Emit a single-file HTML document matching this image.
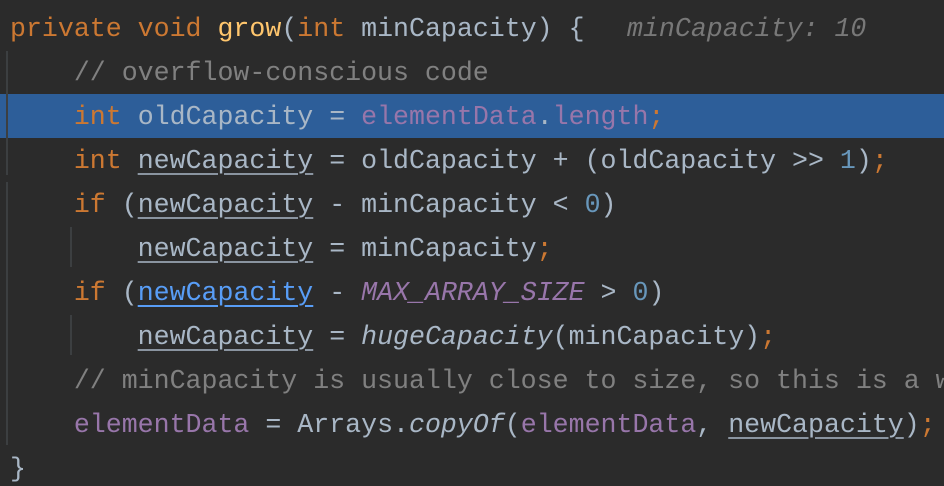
<!DOCTYPE html>
<html><head><meta charset="utf-8"><style>
html,body{margin:0;padding:0;background:#2b2b2b;width:944px;height:486px;overflow:hidden}
#w{position:relative;width:944px;height:486px;overflow:hidden}
.ln{position:absolute;left:10px;height:44px;line-height:44px;font-family:"Liberation Mono",monospace;font-size:26.6px;color:#a9b7c6;white-space:pre}
.k{color:#cc7832}.m{color:#ffc66d}.c{color:#808080}.f{color:#9876aa}.n{color:#6897bb}.i{font-style:italic}
.u{text-decoration:underline;text-decoration-color:#8a94a0;text-underline-offset:5px;text-decoration-thickness:2px}
.b{color:#589df6;text-decoration:underline;text-decoration-color:#589df6;text-underline-offset:5px;text-decoration-thickness:2px}
.hl{position:absolute;left:0;top:94px;width:944px;height:44px;background:#2d5e99}
.g{position:absolute;width:2px;background:#3c3f41}
.h{position:absolute;left:627px;top:7px;line-height:44px;font-family:"Liberation Mono",monospace;font-size:26.6px;font-style:italic;color:#787878;white-space:pre}
</style></head><body><div id="w">
<div class="hl"></div>
<div class="g" style="left:6px;top:51px;height:124px"></div>
<div class="g" style="left:6px;top:182px;height:263px"></div>
<div class="g" style="left:70px;top:227px;height:40px"></div>
<div class="g" style="left:70px;top:315px;height:40px"></div>
<div class="ln" style="top:7px"><span class="k">private void </span><span class="m">grow</span>(<span class="k">int </span>minCapacity) {</div>
<div class="h">minCapacity: 10</div>
<div class="ln c" style="top:51px">    // overflow-conscious code</div>
<div class="ln" style="top:95px">    <span class="k">int </span>oldCapacity = <span class="f">elementData</span>.<span class="f">length</span><span class="k">;</span></div>
<div class="ln" style="top:139px">    <span class="k">int </span><span class="u">newCapacity</span> = oldCapacity + (oldCapacity &gt;&gt; <span class="n">1</span>)<span class="k">;</span></div>
<div class="ln" style="top:183px">    <span class="k">if </span>(<span class="u">newCapacity</span> - minCapacity &lt; <span class="n">0</span>)</div>
<div class="ln" style="top:227px">        <span class="u">newCapacity</span> = minCapacity<span class="k">;</span></div>
<div class="ln" style="top:271px">    <span class="k">if </span>(<span class="b">newCapacity</span> - <span class="f i">MAX_ARRAY_SIZE</span> &gt; <span class="n">0</span>)</div>
<div class="ln" style="top:315px">        <span class="u">newCapacity</span> = <span class="i">hugeCapacity</span>(minCapacity)<span class="k">;</span></div>
<div class="ln c" style="top:359px">    // minCapacity is usually close to size, so this is a win:</div>
<div class="ln" style="top:403px">    <span class="f">elementData</span> = Arrays.<span class="i">copyOf</span>(<span class="f">elementData</span>, <span class="u">newCapacity</span>)<span class="k">;</span></div>
<div class="ln" style="top:447px">}</div>
</div></body></html>
